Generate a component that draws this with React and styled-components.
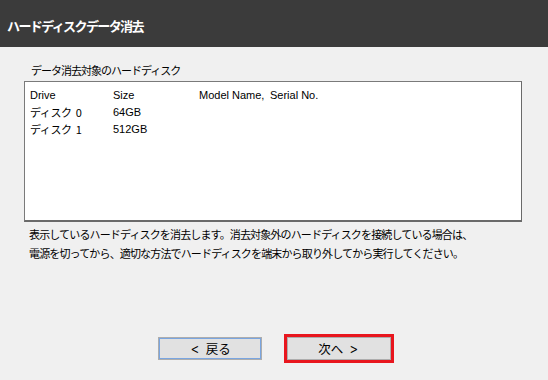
import React from "react";
import styled, { createGlobalStyle } from "styled-components";

const Global = createGlobalStyle`
  html, body { margin: 0; padding: 0; }
  body { background: #f0f0f0; font-family: "Noto Sans CJK JP", "Noto Sans", sans-serif; }
`;

const Window = styled.div`
  width: 548px;
  height: 380px;
  background: #f0f0f0;
  display: flex;
  flex-direction: column;
  overflow: hidden;
`;

const TitleBar = styled.div`
  height: 47px;
  background: #3b3b3b;
  color: #fff;
  display: flex;
  align-items: center;
  padding: 4px 0 0 7px;
  box-sizing: border-box;
  font-size: 13px;
  font-weight: 700;
  letter-spacing: -1.6px;
`;

const Body = styled.div`
  flex: 1;
  display: flex;
  flex-direction: column;
  padding: 0 26px 0 24px;
`;

const GroupLabel = styled.div`
  margin: 15px 0 0 7px;
  height: 17px;
  font-size: 11px;
  line-height: 17px;
  color: #000;
  letter-spacing: -1px;
`;

const ListBox = styled.div`
  height: 141px;
  box-sizing: border-box;
  background: #fff;
  border: 1px solid #7a7a7a;
  border-right-color: #6a6a6a;
  border-bottom: 2px solid #6a6a6a;
  padding: 4px 0 0 5px;
  margin-top: 2px;
`;

const Row = styled.div`
  display: grid;
  grid-template-columns: 83px 86px 71px 1fr;
  height: 17px;
  align-items: center;
  font-size: 11px;
  color: #000;
`;

const Cell = styled.span`
  white-space: pre;
  font-family: ${(p) => (p.jp ? '"Noto Sans CJK JP", sans-serif' : '"Liberation Sans", sans-serif')};
  letter-spacing: ${(p) => (p.jp ? "-0.4px" : "0")};
`;

const Desc = styled.div`
  margin: 3px 0 0 5px;
  font-size: 11px;
  line-height: 18.5px;
  color: #000;
  letter-spacing: -0.85px;
`;

const Buttons = styled.div`
  margin-top: auto;
  margin-bottom: 17px;
  display: flex;
  align-items: center;
  padding-left: 134px;
  gap: 22px;
`;

const Button = styled.button`
  width: 104px;
  height: 23px;
  box-sizing: border-box;
  background: #e1e1e1;
  border: 1px solid #adadad;
  box-shadow: ${(p) => (p.focused ? "inset 0 0 0 1px #7aa5e0" : "none")};
  font-family: "Noto Sans CJK JP", sans-serif;
  font-size: 12.5px;
  color: #000;
  padding: 0;
  display: flex;
  align-items: center;
  justify-content: center;
  gap: 5px;
`;

const Chevron = styled.span`
  font-family: "DejaVu Sans", sans-serif;
  font-size: 14px;
  display: inline-block;
  transform: scaleX(0.7);
`;

const Highlight = styled.div`
  border: 3px solid #e8161e;
  padding: 0;
  display: flex;
`;

export default function App() {
  return (
    <Window>
      <Global />
      <TitleBar>ハードディスクデータ消去</TitleBar>
      <Body>
        <GroupLabel>データ消去対象のハードディスク</GroupLabel>
        <ListBox>
          <Row>
            <Cell>Drive</Cell>
            <Cell>Size</Cell>
            <Cell>Model Name,</Cell>
            <Cell>Serial No.</Cell>
          </Row>
          <Row>
            <Cell jp>ディスク  0</Cell>
            <Cell>64GB</Cell>
            <Cell />
            <Cell />
          </Row>
          <Row>
            <Cell jp>ディスク  1</Cell>
            <Cell>512GB</Cell>
            <Cell />
            <Cell />
          </Row>
        </ListBox>
        <Desc>
          表示しているハードディスクを消去します。消去対象外のハードディスクを接続している場合は、
          <br />
          電源を切ってから、適切な方法でハードディスクを端末から取り外してから実行してください。
        </Desc>
        <Buttons>
          <Button focused>
            <Chevron>&lt;</Chevron>
            <span>戻る</span>
          </Button>
          <Highlight>
            <Button>
              <span>次へ</span>
              <Chevron>&gt;</Chevron>
            </Button>
          </Highlight>
        </Buttons>
      </Body>
    </Window>
  );
}
